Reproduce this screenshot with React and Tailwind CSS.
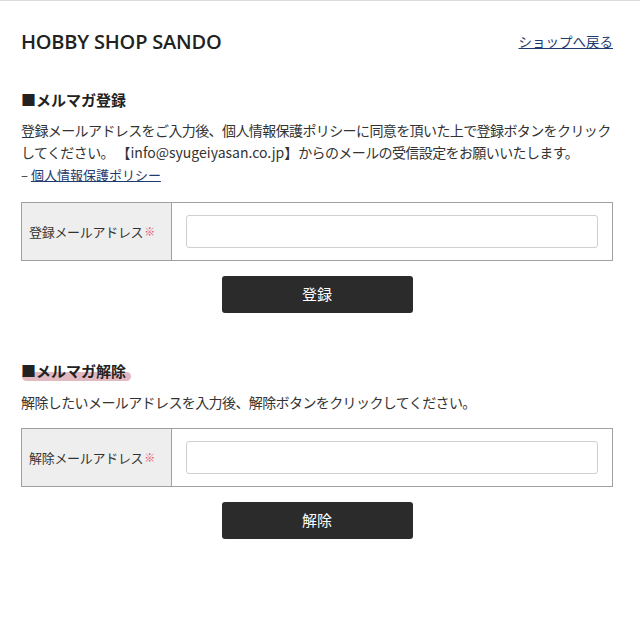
import React from "react";

const jp = { fontFamily: '"Noto Sans CJK JP", "Noto Sans", sans-serif' };

function FormTable({ label }) {
  return (
    <div className="flex border border-[#a0a0a0] h-[59px]">
      <div className="w-[150px] shrink-0 bg-[#eeeeee] border-r border-[#a0a0a0] flex items-center pl-[7px] text-[13px] tracking-[-0.3px] text-[#333]">
        {label}
        <span className="text-[#e0506a] text-[11px] ml-[1px]">※</span>
      </div>
      <div className="flex-1 flex items-center pl-[14px] pr-[14px]">
        <input className="w-full h-[33px] border border-[#cfcfcf] rounded-[3px] bg-white outline-none" />
      </div>
    </div>
  );
}

function Button({ children }) {
  return (
    <div className="flex justify-center">
      <button className="w-[191px] h-[37px] bg-[#2b2b2b] rounded-[3px] text-white text-[15px]">
        {children}
      </button>
    </div>
  );
}

export default function App() {
  return (
    <div className="w-[640px] h-[622px] bg-white border-t border-[#dcdcdc] text-[#222]" style={jp}>
      <div className="ml-[21px] w-[592px]">
        <div className="flex items-center justify-between pt-[25px] h-[56px]">
          <h1
            className="text-[20px] font-semibold text-[#222] tracking-[-0.2px]"
            style={{ fontFamily: '"Open Sans", "Noto Sans", sans-serif' }}
          >
            HOBBY SHOP SANDO
          </h1>
          <a href="#" className="text-[13.5px] text-[#1e3a6e] underline">
            ショップへ戻る
          </a>
        </div>

        <h2 className="mt-[32px] text-[15px] font-bold leading-[22px]">■メルマガ登録</h2>
        <p className="mt-[8px] text-[14px] leading-[22px] tracking-[-0.6px] text-[#333] whitespace-nowrap">
          登録メールアドレスをご入力後、個人情報保護ポリシーに同意を頂いた上で登録ボタンをクリック
          <br />
          してください。 <span className="tracking-normal">【info@syugeiyasan.co.jp】</span>からのメールの受信設定をお願いいたします。
        </p>
        <p className="mt-[2px] text-[13px] leading-[20px] text-[#333]">
          – <a href="#" className="text-[#1e3a6e] underline">個人情報保護ポリシー</a>
        </p>

        <div className="mt-[17px]">
          <FormTable label="登録メールアドレス" />
        </div>
        <div className="mt-[15px]">
          <Button>登録</Button>
        </div>

        <h2 className="mt-[47px] text-[15px] font-bold leading-[22px] relative w-fit">
          <span className="absolute left-[1px] top-[12px] w-[109px] h-[9px] rounded-full bg-[#dba7b1] opacity-80"></span>
          <span className="relative">■メルマガ解除</span>
        </h2>
        <p className="mt-[9px] text-[14px] leading-[22px] tracking-[-0.6px] text-[#333]">
          解除したいメールアドレスを入力後、解除ボタンをクリックしてください。
        </p>

        <div className="mt-[15px]">
          <FormTable label="解除メールアドレス" />
        </div>
        <div className="mt-[15px]">
          <Button>解除</Button>
        </div>
      </div>
    </div>
  );
}
